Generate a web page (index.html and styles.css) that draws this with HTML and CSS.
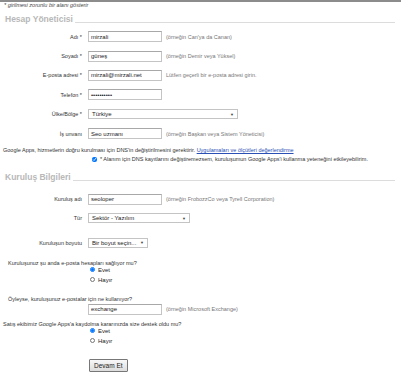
FILE: index.html
```html
<!DOCTYPE html>
<html>
<head>
  <title>Google Apps - Kayıt</title>
  <link rel="stylesheet" href="styles.css">
</head>
<body>
  <p class="note">* girilmesi zorunlu bir alanı gösterir</p>

  <h2 class="section">Hesap Yöneticisi</h2>
  <div class="row">
      <label>Adı *</label>
      <input class="field" type="text" value="mirzali">
      <span class="hint">(örneğin Can'ya da Canan)</span>
  </div>
  <div class="row">
      <label>Soyadı *</label>
      <input class="field" type="text" value="güneş">
      <span class="hint">(örneğin Demir veya Yüksel)</span>
  </div>
  <div class="row">
      <label>E-posta adresi *</label>
      <input class="field" type="text" value="mirzali@mirzali.net">
      <span class="hint">Lütfen geçerli bir e-posta adresi girin.</span>
  </div>
  <div class="row">
      <label>Telefon *</label>
      <input class="field" type="password" value="1234567890">
  </div>
  <div class="row">
      <label>Ülke/Bölge *</label>
      <div class="select wide"><span>Türkiye</span><span class="arrow">▼</span></div>
  </div>
  <div class="row">
      <label>İş unvanı</label>
      <input class="field" type="text" value="Seo uzmanı">
      <span class="hint">(örneğin Başkan veya Sistem Yöneticisi)</span>
  </div>

  <p class="dns">Google Apps, hizmetlerin doğru kurulması için DNS'in değiştirilmesini gerektirir. <a href="#">Uygulamaları ve ölçütleri değerlendirme</a></p>
  <label class="agree"><input type="checkbox" checked><span>* Alanım için DNS kayıtlarını değiştiremezsem, kuruluşumun Google Apps'i kullanma yeteneğini etkileyebilirim.</span></label>

  <h2 class="section second">Kuruluş Bilgileri</h2>
  <div class="row">
      <label>Kuruluş adı</label>
      <input class="field" type="text" value="seoloper">
      <span class="hint">(örneğin FrobozzCo veya Tyrell Corporation)</span>
  </div>
  <div class="row">
      <label>Tür</label>
      <div class="select mid"><span>Sektör - Yazılım</span><span class="arrow">▼</span></div>
  </div>
  <div class="row spaced">
      <label>Kuruluşun boyutu</label>
      <div class="select small"><span>Bir boyut seçin...</span><span class="arrow">▼</span></div>
  </div>

  <p class="question">Kuruluşunuz şu anda e-posta hesapları sağlıyor mu?</p>
  <div class="choices">
      <label><input type="radio" name="hosted" checked> Evet</label>
      <label><input type="radio" name="hosted"> Hayır</label>
  </div>

  <p class="question apart">Öyleyse, kuruluşunuz e-postalar için ne kullanıyor?</p>
  <div class="row tight">
      <label></label>
      <input class="field" type="text" value="exchange">
      <span class="hint">(örneğin Microsoft Exchange)</span>
  </div>

  <p class="question flush">Satış ekibimiz Google Apps'a kaydolma kararınızda size destek oldu mu?</p>
  <div class="choices">
      <label><input type="radio" name="sales" checked> Evet</label>
      <label><input type="radio" name="sales"> Hayır</label>
  </div>

  <div class="actions">
      <button>Devam Et</button>
  </div>
</body>
</html>
```

FILE: styles.css
```css
body {
    font-family: "Liberation Sans", Arial, sans-serif;
    font-size: 5.5px;
    color: #333;
    background-color: #ffffff;
    margin: 0;
    padding: 0;
    border-top: 2px solid #8c8c8c;
}
p {
    margin: 0;
}
.note {
    font-style: italic;
    line-height: 7px;
    padding-left: 4px;
    color: #444;
}
.section {
    display: flex;
    align-items: flex-end;
    margin: 5px 6px 3px 5px;
    font-size: 8.5px;
    line-height: 10px;
    color: #b8b8b8;
}
.section::after {
    content: "";
    flex: 1;
    margin-left: 2px;
    margin-bottom: 1px;
    border-bottom: 1px solid #dcdcdc;
}
.section.second {
    margin-top: 9px;
    margin-bottom: 7px;
}
.row {
    display: flex;
    align-items: center;
    height: 19.4px;
}
.row.spaced {
    margin-top: 5px;
}
.row.tight {
    margin-top: -3px;
}
.row label {
    width: 82px;
    margin-right: 6px;
    text-align: right;
    flex-shrink: 0;
}
.field {
    box-sizing: border-box;
    width: 74px;
    height: 11px;
    padding: 0 2px;
    border: 1px solid #c4c4c4;
    border-top-color: #a8a8a8;
    font-family: "Liberation Sans", Arial, sans-serif;
    font-size: 6px;
    color: #222;
    outline: none;
}
.hint {
    margin-left: 4px;
    color: #777;
}
.select {
    box-sizing: border-box;
    display: flex;
    align-items: center;
    height: 10px;
    padding: 0 3px;
    border: 1px solid #c4c4c4;
    background: #fff;
    font-size: 6px;
    color: #222;
}
.select.wide {
    width: 150px;
}
.select.mid {
    width: 102px;
}
.select.small {
    width: 60px;
}
.select .arrow {
    margin-left: auto;
    font-size: 4px;
    color: #444;
}
.dns {
    margin-top: 3px;
    padding-left: 3px;
    line-height: 8px;
}
.dns a {
    color: #2a4fb5;
}
.agree {
    display: flex;
    align-items: center;
    margin-top: 1px;
    padding-left: 92px;
    line-height: 8px;
}
.agree input {
    width: 5px;
    height: 5px;
    margin: 0 3px 0 0;
}
.question {
    margin-top: 6px;
    padding-left: 8px;
    line-height: 8px;
}
.question.apart {
    margin-top: 10px;
}
.question.flush {
    padding-left: 3px;
    margin-top: 1px;
}
.choices {
    display: flex;
    flex-direction: column;
    margin-top: -2px;
    padding-left: 89px;
    font-size: 6px;
    color: #222;
}
.choices label {
    display: flex;
    align-items: center;
    height: 10px;
}
.choices input {
    width: 5px;
    height: 5px;
    margin: 0 3px 0 1px;
}
.actions {
    margin-top: 13px;
    padding-left: 89px;
}
.actions button {
    height: 13px;
    padding: 0 4px;
    border: 1px solid #777;
    border-radius: 1px;
    background: linear-gradient(#f8f8f8, #dcdcdc);
    font-family: "Liberation Sans", Arial, sans-serif;
    font-size: 6.5px;
    color: #222;
}
```
